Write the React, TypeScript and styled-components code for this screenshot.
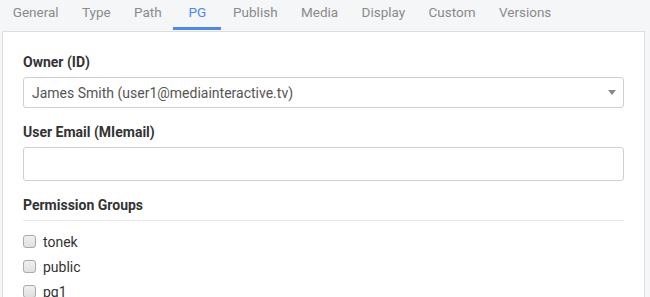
import styled, { createGlobalStyle } from 'styled-components';

const GlobalStyle = createGlobalStyle`
  html, body {
    margin: 0;
    padding: 0;
    background: #f5f6f8;
    overflow: hidden;
  }
  body {
    font-family: Roboto, "Liberation Sans", Arial, sans-serif;
  }
`;

const Page = styled.div`
  height: 297px;
  overflow: hidden;
`;

const Tabs = styled.nav`
  display: flex;
  height: 30px;
  padding-left: 1px;
`;

const Tab = styled.div<{ $active?: boolean }>`
  min-width: 48px;
  box-sizing: border-box;
  padding: 0 11.7px 3px;
  text-align: center;
  font-size: 13.5px;
  line-height: 24px;
  color: ${(props) => (props.$active ? '#4a8af0' : '#8a8a8a')};
  border-bottom: 3px solid ${(props) => (props.$active ? '#4a8af0' : 'transparent')};
  cursor: pointer;
`;

const Panel = styled.section`
  margin: 1px 5px 0 2px;
  background: #fff;
  border: 1px solid #dedede;
  padding: 21px 20px 30px;
`;

const Field = styled.div`
  margin-bottom: 15px;
`;

const Label = styled.label`
  display: block;
  font-size: 14px;
  line-height: 18px;
  font-weight: 700;
  color: #333;
  margin-bottom: 6px;
`;

const SectionTitle = styled.h3`
  margin: 0 0 8px;
  font-size: 14px;
  line-height: 18px;
  font-weight: 700;
  color: #333;
  padding-bottom: 6px;
  border-bottom: 1px solid #e8e8e8;
`;

const SelectBox = styled.div`
  height: 31px;
  box-sizing: border-box;
  border: 1px solid #cfcfcf;
  border-radius: 3px;
  display: flex;
  align-items: center;
  justify-content: space-between;
  padding: 0 7px 0 8px;
  font-size: 14px;
  color: #555;
`;

const TextInput = styled.input`
  display: block;
  width: 100%;
  height: 34px;
  box-sizing: border-box;
  border: 1px solid #cfcfcf;
  border-radius: 3px;
  padding: 0 8px;
  font-family: inherit;
  font-size: 14px;
  color: #555;
  outline: none;
`;

const CheckList = styled.div`
  display: flex;
  flex-direction: column;
`;

const CheckRow = styled.label`
  display: flex;
  align-items: center;
  gap: 7px;
  height: 25px;
  font-size: 14px;
  color: #333;
`;

const Box = styled.input`
  appearance: none;
  margin: 0;
  width: 13px;
  height: 13px;
  border: 1px solid #aaa;
  border-radius: 3px;
  background: linear-gradient(#f0f0f0, #e0e0e0);
`;

const tabs = ['General', 'Type', 'Path', 'PG', 'Publish', 'Media', 'Display', 'Custom', 'Versions'];
const groups = ['tonek', 'public', 'pg1'];

function App() {
  return (
    <Page>
      <GlobalStyle />
      <Tabs>
        {tabs.map((t) => (
          <Tab key={t} $active={t === 'PG'}>
            {t}
          </Tab>
        ))}
      </Tabs>
      <Panel>
        <Field>
          <Label>Owner (ID)</Label>
          <SelectBox>
            <span>James Smith (user1@mediainteractive.tv)</span>
            <svg width="8" height="5" viewBox="0 0 8 5">
              <polygon points="0,0 8,0 4,5" fill="#888" />
            </svg>
          </SelectBox>
        </Field>
        <Field>
          <Label>User Email (MIemail)</Label>
          <TextInput type="text" />
        </Field>
        <SectionTitle>Permission Groups</SectionTitle>
        <CheckList>
          {groups.map((g) => (
            <CheckRow key={g}>
              <Box type="checkbox" />
              {g}
            </CheckRow>
          ))}
        </CheckList>
      </Panel>
    </Page>
  );
}

export default App;
